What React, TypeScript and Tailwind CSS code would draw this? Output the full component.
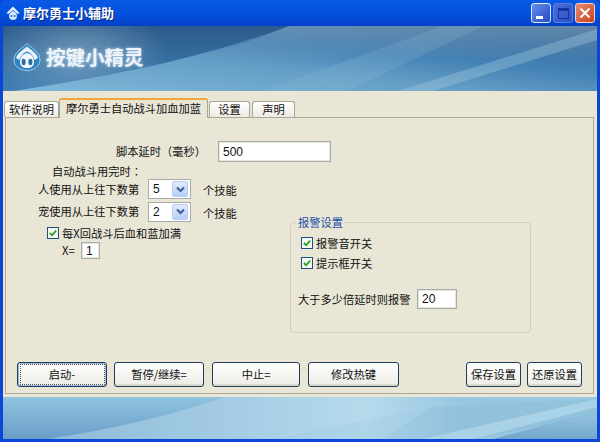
const F = '[font-family:"Noto_Sans_CJK_SC","Liberation_Sans",sans-serif]';
const TC = '[font-family:"Noto_Sans_CJK_TC",sans-serif]';

function Check() {
  return (
    <span className="flex h-[12px] w-[12px] shrink-0 items-center justify-center border border-[#1c5180] bg-[#f6f6f0]">
      <svg width="8" height="8" viewBox="0 0 9 9">
        <path d="M1 4.5 L3.5 7 L8 1.8" fill="none" stroke="#21a121" strokeWidth="2" />
      </svg>
    </span>
  );
}

function Input({ w, children }: { w: string; children: string }) {
  return <div className={`${w} flex items-center border border-[#a5aca9] bg-white pl-[4px] text-[12px] leading-none shadow-[inset_0_0_0_1px_#e6e6dc] [font-family:"Liberation_Sans",sans-serif]`}>{children}</div>;
}

function Select({ v }: { v: string }) {
  return (
    <div className="flex h-[20px] w-[43px] items-center justify-between border border-[#a5aca9] bg-white pr-[2px] pl-[4px] text-[12px] [font-family:'Liberation_Sans',sans-serif]">
      {v}
      <span className="flex h-[16px] w-[16px] items-center justify-center rounded-[2px] border border-[#b6cdf5] bg-gradient-to-b from-[#e3ebfd] to-[#b9cdf8]">
        <svg width="9" height="7" viewBox="0 0 9 7"><path d="M1 1.5 L4.5 5 L8 1.5" fill="none" stroke="#3c5a96" strokeWidth="2" /></svg>
      </span>
    </div>
  );
}

function Btn({ w, children, focus }: { w: string; children: string; focus?: boolean }) {
  return (
    <div className={`${w} flex h-[25px] items-center justify-center rounded-[3px] border border-[#1f3c5c] bg-gradient-to-b from-white to-[#ecebe4] text-[11.25px] text-[#111] ${focus ? 'shadow-[inset_0_0_0_1px_#9db7e0]' : 'shadow-[inset_0_-2px_0_#dcd8cc]'}`}>
      <span className={focus ? 'flex h-[21px] w-[85px] items-center justify-center border border-dotted border-[#555]' : ''}>{children}</span>
    </div>
  );
}

function Tab({ w, children, active }: { w: string; children: string; active?: boolean }) {
  return active ? (
    <div className="relative z-10 -mb-px flex h-[20px] w-[149px] items-center justify-center rounded-t-[3px] border-x border-[#a5a598] border-t-2 border-t-[#f0a63a] bg-[#e9e6d6] pb-[2px] text-[11.25px]">
      {children}
    </div>
  ) : (
    <div className={`${w} flex h-[16px] items-center justify-center rounded-t-[3px] border border-b-0 border-[#a5a598] bg-gradient-to-b from-white to-[#ecebe3] text-[11.25px]`}>
      {children}
    </div>
  );
}

function HeaderArt() {
  return (
    <svg className="absolute inset-0" width="594" height="65" viewBox="0 0 594 65" preserveAspectRatio="none">
      <defs>
        <linearGradient id="hb" x1="0" y1="0" x2="0" y2="1"><stop offset="0" stopColor="#2b5a8a" /><stop offset="1" stopColor="#3f80b5" /></linearGradient>
        <linearGradient id="hw" x1="0" y1="1" x2="1" y2="0">
          <stop offset="0" stopColor="#7fb8d8" /><stop offset="0.4" stopColor="#649ec6" /><stop offset="0.62" stopColor="#4482b5" /><stop offset="0.85" stopColor="#3a72a4" /><stop offset="1" stopColor="#3a6a98" />
        </linearGradient>
        <linearGradient id="ht" x1="0" y1="0" x2="0" y2="1"><stop offset="0" stopColor="#8aa2b8" stopOpacity="0.5" /><stop offset="1" stopColor="#8aa2b8" stopOpacity="0" /></linearGradient>
        <radialGradient id="hr" cx="0.5" cy="0.5" r="0.5"><stop offset="0" stopColor="#a8c4d8" stopOpacity="0.5" /><stop offset="1" stopColor="#a8c4d8" stopOpacity="0" /></radialGradient>
      </defs>
      <rect width="594" height="65" fill="url(#hb)" />
      <ellipse cx="75" cy="28" rx="90" ry="50" fill="url(#hr)" />
      <path d="M286 0 C200 32 110 50 10 65 L594 65 L594 0 Z" fill="url(#hw)" />
      <path d="M286 0 C250 15 220 25 190 33 L594 33 L594 0 Z" fill="url(#ht)" />
      <path d="M440 0 L260 65 L345 65 L480 0 Z" fill="#9cc6dc" opacity="0.18" />
      <path d="M594 3 L594 14 L430 65 L395 65 Z" fill="#a8cee0" opacity="0.35" />
    </svg>
  );
}

function FooterArt() {
  return (
    <svg className="absolute inset-0" width="594" height="42" viewBox="0 0 594 42" preserveAspectRatio="none">
      <defs>
        <linearGradient id="fb" x1="0" y1="0" x2="0" y2="1"><stop offset="0" stopColor="#8fc3df" /><stop offset="1" stopColor="#6a9ec8" /></linearGradient>
        <linearGradient id="fw" x1="0" y1="0" x2="1" y2="0">
          <stop offset="0" stopColor="#8fbad8" /><stop offset="0.4" stopColor="#a8d0e6" /><stop offset="0.58" stopColor="#b6daec" /><stop offset="0.75" stopColor="#98c6e0" /><stop offset="1" stopColor="#98c8e0" />
        </linearGradient>
        <linearGradient id="fs" x1="0" y1="0" x2="0" y2="1"><stop offset="0" stopColor="#5a90c0" stopOpacity="0" /><stop offset="1" stopColor="#5a90c0" stopOpacity="0.6" /></linearGradient>
      </defs>
      <rect width="594" height="42" fill="url(#fb)" />
      <path d="M222 0 C170 18 110 32 45 42 L594 42 L594 0 Z" fill="url(#fw)" />
      <path d="M440 8 L380 42 L270 42 L300 36 Z" fill="#a0cae2" opacity="0.35" />
      <path d="M430 10 L594 2 L594 18 L470 42 L380 42 Z" fill="#7fb0d4" opacity="0.2" />
      <path d="M594 2 L594 10 L470 42 L420 42 Z" fill="#b5d9ea" opacity="0.7" />
      <path d="M594 14 L594 42 L490 42 Z" fill="url(#fs)" />
    </svg>
  );
}

export default function App() {
  return (
    <div className={`flex h-[442px] w-[600px] flex-col overflow-hidden bg-[#0a46d8] text-[#111] ${F}`}>
      <div className="flex h-[26px] shrink-0 items-center rounded-t-[7px] bg-gradient-to-b from-[#0a5ae6] via-[#0352e0] to-[#0340c8] pr-[5px] pl-[6px]">
        <svg width="14" height="15" viewBox="0 0 14 15" className="mr-[3px]">
          <path d="M7 0.5 L13.5 7 L11.8 8 L7 4 L2.2 8 L0.5 7 Z" fill="#e4f2ff" />
          <path d="M7 5 C10 6 11 8 11 10 C11 13 9 14 7 14 C5 14 3 13 3 10 C3 8 4 6 7 5 Z" fill="#cfe6fb" />
          <circle cx="5.4" cy="10" r="1" fill="#2f6fb0" /><circle cx="8.6" cy="10" r="1" fill="#2f6fb0" />
        </svg>
        <span className="text-[13px] font-bold text-white [text-shadow:1px_1px_0_#0a2a80]">摩尔勇士小辅助</span>
        <div className="ml-auto flex gap-[2px]">
          <div className="flex h-[20px] w-[20px] items-end rounded-[3px] border border-[#dfe8fb] bg-gradient-to-br from-[#6a8eee] to-[#2349c4] pb-[3px] pl-[4px]">
            <div className="h-[3px] w-[7px] bg-white" />
          </div>
          <div className="flex h-[20px] w-[20px] items-center justify-center rounded-[3px] border border-[#5a7fe0] bg-gradient-to-br from-[#4a70dc] to-[#2a50c4]">
            <div className="h-[11px] w-[11px] border border-[#16349c] border-t-[3px]" />
          </div>
          <div className="flex h-[20px] w-[20px] items-center justify-center rounded-[3px] border border-[#f1d8cc] bg-gradient-to-br from-[#e88a6c] to-[#c8401c]">
            <svg width="12" height="12" viewBox="0 0 12 12"><path d="M1.5 1.5 L10.5 10.5 M10.5 1.5 L1.5 10.5" stroke="#fff" strokeWidth="2" /></svg>
          </div>
        </div>
      </div>

      <div className="mx-[3px] mb-[3px] flex min-h-0 flex-1 flex-col">
        <div className="relative flex h-[65px] shrink-0 items-center pb-[3px] pl-[10px]">
          <HeaderArt />
          <svg width="28" height="28" viewBox="0 0 28 28" className="relative mr-[5px]">
            <path d="M14 0.5 C17 4 26 8 27 16 C27.5 23 21 27.5 14 27.5 C7 27.5 0.5 23 1 16 C2 8 11 4 14 0.5 Z" fill="#2d86c4" stroke="#bcdcf0" strokeWidth="0.8" />
            <path d="M14 3.5 C18 7 23.5 10 25 15 L21.5 17 C20 12 17 9.5 14 8.5 C11 9.5 8 12 6.5 17 L3 15 C4.5 10 10 7 14 3.5 Z" fill="#e8f2f8" />
            <path d="M14 10 C19 11 21 15 21 19 C21 23 18 25 14 25 C10 25 7 23 7 19 C7 15 9 11 14 10 Z" fill="#f2f7fa" />
            <ellipse cx="10.6" cy="19" rx="2" ry="3.2" fill="#2b6ca5" /><ellipse cx="17.4" cy="19" rx="2" ry="3.2" fill="#2b6ca5" />
          </svg>
          <span className="relative text-[19.5px] leading-none font-bold text-[#eef5fa] [text-shadow:0_0_3px_#cfe4f2]">按键小精灵</span>
        </div>

        <div className="flex h-[306px] shrink-0 flex-col bg-[#e9e6d6] pt-[10px] pr-[3px] pl-[2px]">
          <div className="-ml-px flex h-[16px] items-end">
            <Tab w="w-[55px]">软件说明</Tab>
            <Tab w="" active>摩尔勇士自动战斗加血加蓝</Tab>
            <div className="w-[1px]" />
            <Tab w="w-[41px]">设置</Tab>
            <div className="w-[2px]" />
            <Tab w="w-[43px]">声明</Tab>
          </div>
          <div className="flex h-[277px] flex-col border border-[#aca899] text-[11.25px]">
            <div className="flex items-center pt-[23px] pl-[110px]">
              <span className={`w-[102px] whitespace-nowrap ${TC}`}>脚本延时（毫秒）</span>
              <Input w="h-[21px] w-[113px]">500</Input>
            </div>
            <div className="flex min-h-0">
              <div className="w-[284px] shrink-0">
                <div className={`h-[16px] pl-[46px] leading-[18px] ${TC}`}>自动战斗用完时：</div>
                <div className="flex h-[22px] items-center pl-[32px]">
                  <span className="w-[110px] whitespace-nowrap">人使用从上往下数第</span>
                  <Select v="5" />
                  <span className="mt-[3px] ml-[12px]">个技能</span>
                </div>
                <div className="flex h-[23px] items-center pl-[32px]">
                  <span className="w-[110px] whitespace-nowrap">宠使用从上往下数第</span>
                  <Select v="2" />
                  <span className="mt-[3px] ml-[12px]">个技能</span>
                </div>
                <div className="mt-[3px] flex items-center gap-[3px] pl-[41px] leading-[14px]">
                  <Check /><span>每X回战斗后血和蓝加满</span>
                </div>
                <div className="mt-[2px] flex items-center pl-[56px]">
                  <span className="w-[19px]">X=</span>
                  <Input w="h-[17px] w-[19px]">1</Input>
                </div>
              </div>
              <div className="relative mt-[60px] flex h-[111px] w-[241px] flex-col rounded-[4px] border border-[#d0d0bf] pt-[13px] pl-[10px]">
                <span className="absolute top-[-8px] left-[6px] bg-[#e9e6d6] px-[1px] leading-[14px] text-[#1d50a8]">报警设置</span>
                <div className="flex items-center gap-[3px] leading-[14px]"><Check /><span>报警音开关</span></div>
                <div className="mt-[6px] flex items-center gap-[3px] leading-[14px]"><Check /><span>提示框开关</span></div>
                <div className="mt-[19px] -ml-[3px] flex items-center">
                  <span className="w-[119px] whitespace-nowrap">大于多少倍延时则报警</span>
                  <Input w="h-[20px] w-[40px]">20</Input>
                </div>
              </div>
            </div>
            <div className="mt-auto mb-[6px] flex pr-[11px] pl-[11px]">
              <Btn w="w-[90px] mr-[7px]" focus>启动-</Btn>
              <Btn w="w-[90px] mr-[8px]">暂停/继续=</Btn>
              <Btn w="w-[88px] mr-[8px]">中止=</Btn>
              <Btn w="w-[91px]">修改热键</Btn>
              <Btn w="w-[55px] ml-auto mr-[6px]">保存设置</Btn>
              <Btn w="w-[55px]">还原设置</Btn>
            </div>
          </div>
        </div>

        <div className="relative min-h-0 flex-1"><FooterArt /></div>
      </div>
    </div>
  );
}
